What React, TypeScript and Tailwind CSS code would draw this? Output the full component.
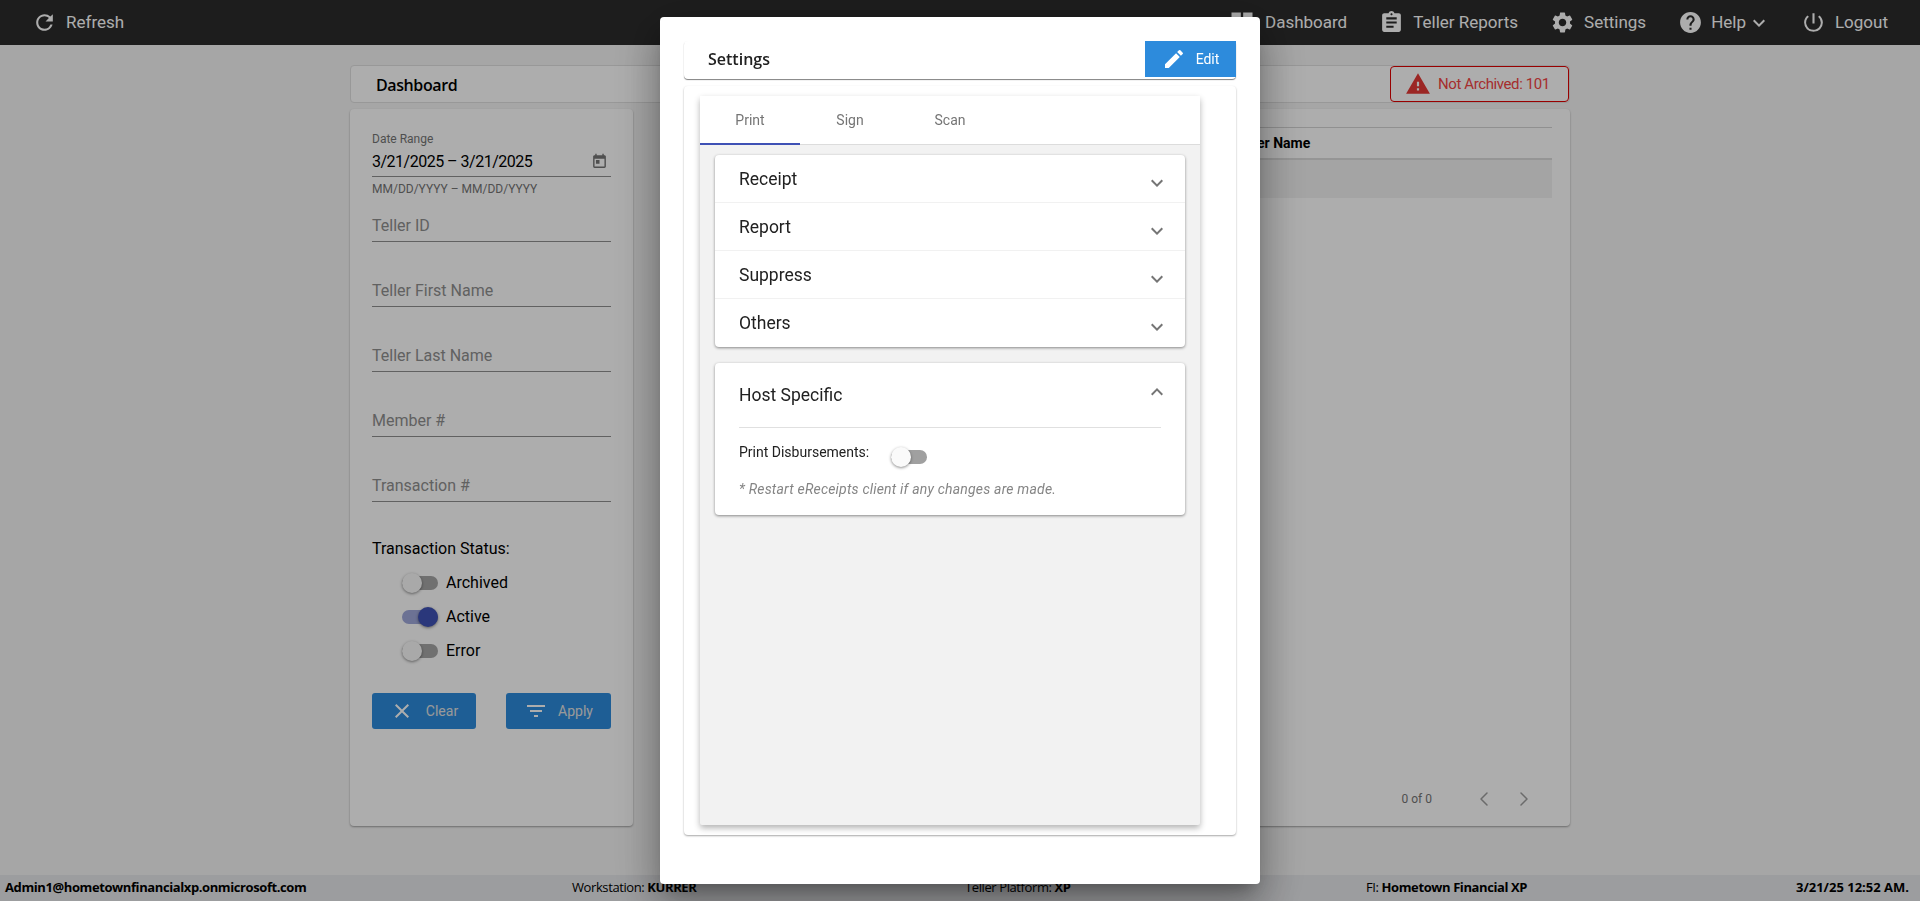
import { ChevronLeft, ChevronRight } from 'lucide-react'
import {
  MdAssignment,
  MdClose,
  MdDashboard,
  MdEdit,
  MdExpandLess,
  MdExpandMore,
  MdFilterList,
  MdHelp,
  MdPowerSettingsNew,
  MdRefresh,
  MdSettings,
  MdToday,
  MdWarning,
} from 'react-icons/md'

function NavItem({ icon, label, className }: { icon: React.ReactNode; label: string; className?: string }) {
  return (
    <div className={`flex items-center gap-[9px] ${className ?? ''}`}>
      {icon}
      <span>{label}</span>
    </div>
  )
}

function Toggle({ on, track }: { on?: boolean; track: string }) {
  return (
    <div className={`w-9 h-3.5 rounded-full flex items-center shrink-0 ${track} ${on ? 'justify-end' : 'justify-start'}`}>
      <div className={`w-5 h-5 rounded-full shadow-[0_1px_3px_rgba(0,0,0,0.45)] ${on ? 'bg-[#3f51b5]' : 'bg-[#fafafa]'}`} />
    </div>
  )
}

function FilterField({ label, first }: { label: string; first?: boolean }) {
  return (
    <div className={`flex items-end border-b border-[#8f8f8f] pb-[3px] text-[#8f8f8f] text-base ${first ? 'h-[45px]' : 'h-[65px]'}`}>
      {label}
    </div>
  )
}

function StatusRow({ label, on }: { label: string; on?: boolean }) {
  return (
    <div className="h-[34px] pl-[30px] flex items-center gap-2 text-base text-black">
      <Toggle on={on} track={on ? 'bg-[#9fa8da]' : 'bg-[#a6a6a6]'} />
      <span>{label}</span>
    </div>
  )
}

function AccordionRow({ label, last }: { label: string; last?: boolean }) {
  return (
    <div className={`h-12 pl-6 pr-4 flex items-center justify-between ${last ? '' : 'border-b border-[#f1f1f1]'}`}>
      <span className="text-[17.5px] text-[#212121] mt-[1px]">{label}</span>
      <MdExpandMore size={24} className="text-[#757575] mt-[8px]" />
    </div>
  )
}

function FooterItem({ label, value }: { label?: string; value: string }) {
  return (
    <div className="whitespace-nowrap">
      {label && <span className="font-normal">{label} </span>}
      <span className="font-bold">{value}</span>
    </div>
  )
}

export default function App() {
  return (
    <div className="h-screen w-full bg-[#f5f5f5] flex flex-col font-['Roboto',sans-serif] overflow-hidden relative">
      {/* ── Top bar ── */}
      <header className="h-[45px] shrink-0 bg-[#2c2c2c] text-white text-[17px] pl-[32px] pr-[32px] flex items-center justify-between">
        <NavItem icon={<MdRefresh size={25} />} label="Refresh" className="gap-[8px]" />
        <div className="flex items-center">
          <NavItem icon={<MdDashboard size={28} />} label="Dashboard" className="gap-[4px]" />
          <NavItem icon={<MdAssignment size={25} />} label="Teller Reports" className="ml-[32px]" />
          <NavItem icon={<MdSettings size={25} />} label="Settings" className="ml-[32px]" />
          <div className="ml-[32px] flex items-center gap-[8px]">
            <MdHelp size={25} />
            <span>Help</span>
            <MdExpandMore size={24} className="-ml-[7px]" />
          </div>
          <NavItem icon={<MdPowerSettingsNew size={25} />} label="Logout" className="ml-[30px]" />
        </div>
      </header>

      {/* ── Main ── */}
      <main className="flex-1 min-h-0 pl-[350px] pr-[350px] pt-[20px] pb-[49px] flex flex-col gap-[6px]">
        <div className="h-[38px] shrink-0 bg-white border border-[#e0e0e0] rounded-[4px] flex items-center justify-between pl-[25px]">
          <span className="font-['Open_Sans',sans-serif] font-semibold text-base text-black tracking-[-0.4px] mt-[2px]">Dashboard</span>
          <div className="h-full w-[179px] border border-[#e00000] rounded-[4px] flex items-center pl-[14px] gap-[7px] text-[15px] text-[#f44444] tracking-[-0.4px]">
            <MdWarning size={26} className="text-[#e53935]" />
            <span>Not Archived: 101</span>
          </div>
        </div>

        <div className="flex-1 min-h-0 flex gap-[40px]">
          {/* Filter panel */}
          <aside className="w-[283px] shrink-0 bg-white rounded-[4px] shadow-[0_1px_2px_rgba(0,0,0,0.35)] px-[22px] pt-[22px]">
            <div className="text-xs leading-4 text-[#757575]">Date Range</div>
            <div className="h-[30px] border-b border-[#8f8f8f] flex items-center justify-between text-base text-black">
              <span className="tracking-[-0.5px]">3/21/2025 – 3/21/2025</span>
              <MdToday size={17} className="text-[#757575] mr-[3px]" />
            </div>
            <div className="mt-[4px] text-xs leading-4 text-[#757575]">MM/DD/YYYY – MM/DD/YYYY</div>
            <FilterField label="Teller ID" first />
            <FilterField label="Teller First Name" />
            <FilterField label="Teller Last Name" />
            <FilterField label="Member #" />
            <FilterField label="Transaction #" />

            <div className="mt-[35px] text-base leading-6 text-black">Transaction Status:</div>
            <div className="mt-[5px]">
              <StatusRow label="Archived" />
              <StatusRow label="Active" on />
              <StatusRow label="Error" />
            </div>

            <div className="mt-[25px] flex justify-between text-sm text-[#e2e2e2]">
              <button className="w-[104px] h-9 bg-[#2d8bdc] rounded-[3px] flex items-center justify-center gap-[12px]">
                <MdClose size={24} className="text-white" />
                <span>Clear</span>
              </button>
              <button className="w-[105px] h-9 bg-[#2d8bdc] rounded-[3px] flex items-center justify-center gap-[10px]">
                <MdFilterList size={24} className="text-white" />
                <span>Apply</span>
              </button>
            </div>
          </aside>

          {/* Results panel */}
          <section className="flex-1 min-w-0 bg-white rounded-[4px] shadow-[0_1px_2px_rgba(0,0,0,0.35)] px-[18px] pt-[18px] pb-[14px] flex flex-col">
            <div className="h-[33px] border-t border-b-2 border-t-[#d4d4d4] border-b-[#dcdcdc] pl-[543px] flex items-center text-sm font-bold text-black">
              Teller Name
            </div>
            <div className="h-[38px] bg-[#f2f2f2]" />
            <div className="mt-auto h-[26px] pr-[16px] flex items-center justify-end text-xs text-[#757575]">
              <span>0 of 0</span>
              <ChevronLeft size={24} strokeWidth={1.5} className="ml-[40px] text-[#9e9e9e]" />
              <ChevronRight size={24} strokeWidth={1.5} className="ml-[16px] text-[#9e9e9e]" />
            </div>
          </section>
        </div>
      </main>

      {/* ── Status bar ── */}
      <footer className="h-[26px] shrink-0 bg-[#e6e7ea] pl-[5px] pr-[11px] grid grid-cols-[567px_393px_401px_1fr_auto] items-center font-['Open_Sans',sans-serif] text-[13px] tracking-[-0.4px] text-black">
        <FooterItem value="Admin1@hometownfinancialxp.onmicrosoft.com" />
        <FooterItem label="Workstation:" value="KURRER" />
        <FooterItem label="Teller Platform:" value="XP" />
        <FooterItem label="FI:" value="Hometown Financial XP" />
        <div className="tracking-normal">
          <FooterItem value="3/21/25 12:52 AM." />
        </div>
      </footer>

      {/* ── Settings dialog ── */}
      <div className="fixed inset-0 bg-black/32 flex justify-center items-start pt-[17px]">
        <div className="w-[600px] h-[867px] bg-white rounded-[4px] p-6 shadow-[0_11px_15px_-7px_rgba(0,0,0,0.25),0_24px_38px_3px_rgba(0,0,0,0.2),0_9px_46px_8px_rgba(0,0,0,0.18)]">
          <div className="h-[38px] rounded-[4px] shadow-[0_1px_1px_rgba(0,0,0,0.5)] flex items-start justify-between pl-6">
            <span className="h-9 flex items-center font-['Open_Sans',sans-serif] font-semibold text-base text-[#212121]">Settings</span>
            <button className="w-[91px] h-9 bg-[#2d8bdc] text-white text-sm flex items-center justify-center gap-[10px]">
              <MdEdit size={24} />
              <span>Edit</span>
            </button>
          </div>

          <div className="mt-[7px] h-[749px] rounded-[4px] shadow-[0_1px_2px_rgba(0,0,0,0.35)] pl-4 pr-9 py-2.5">
            <div className="h-full bg-[#f2f2f2] rounded-[2px] shadow-[0_3px_6px_rgba(0,0,0,0.3)] flex flex-col">
              {/* Tabs */}
              <div className="h-[49px] shrink-0 bg-white border-b border-[#dcdcdc] flex text-sm text-[#757575]">
                <div className="w-[100px] h-[49px] border-b-2 border-[#3f51b5] flex items-center justify-center">Print</div>
                <div className="w-[100px] flex items-center justify-center">Sign</div>
                <div className="w-[100px] flex items-center justify-center">Scan</div>
              </div>

              <div className="px-[15px] pt-[10px]">
                <div className="bg-white rounded-[4px] shadow-[0_1px_3px_rgba(0,0,0,0.45)]">
                  <AccordionRow label="Receipt" />
                  <AccordionRow label="Report" />
                  <AccordionRow label="Suppress" />
                  <AccordionRow label="Others" last />
                </div>

                <div className="mt-4 bg-white rounded-[4px] shadow-[0_1px_3px_rgba(0,0,0,0.45)] pl-6 pr-6 h-[152px]">
                  <div className="h-[65px] border-b border-[#e0e0e0] flex items-center justify-between">
                    <span className="text-[17.5px] text-[#212121] mt-[1px]">Host Specific</span>
                    <MdExpandLess size={24} className="text-[#757575] -mr-[8px] -mt-[6px]" />
                  </div>
                  <div className="mt-[15px] flex items-start text-sm text-[#212121]">
                    <span className="leading-[18px]">Print Disbursements:</span>
                    <div className="ml-[22px] mt-[7px]">
                      <Toggle track="bg-[#a0a0a0]" />
                    </div>
                  </div>
                  <p className="mt-[15px] text-sm italic text-[#858585] tracking-[0.2px]">* Restart eReceipts client if any changes are made.</p>
                </div>
              </div>
            </div>
          </div>
        </div>
      </div>
    </div>
  )
}
